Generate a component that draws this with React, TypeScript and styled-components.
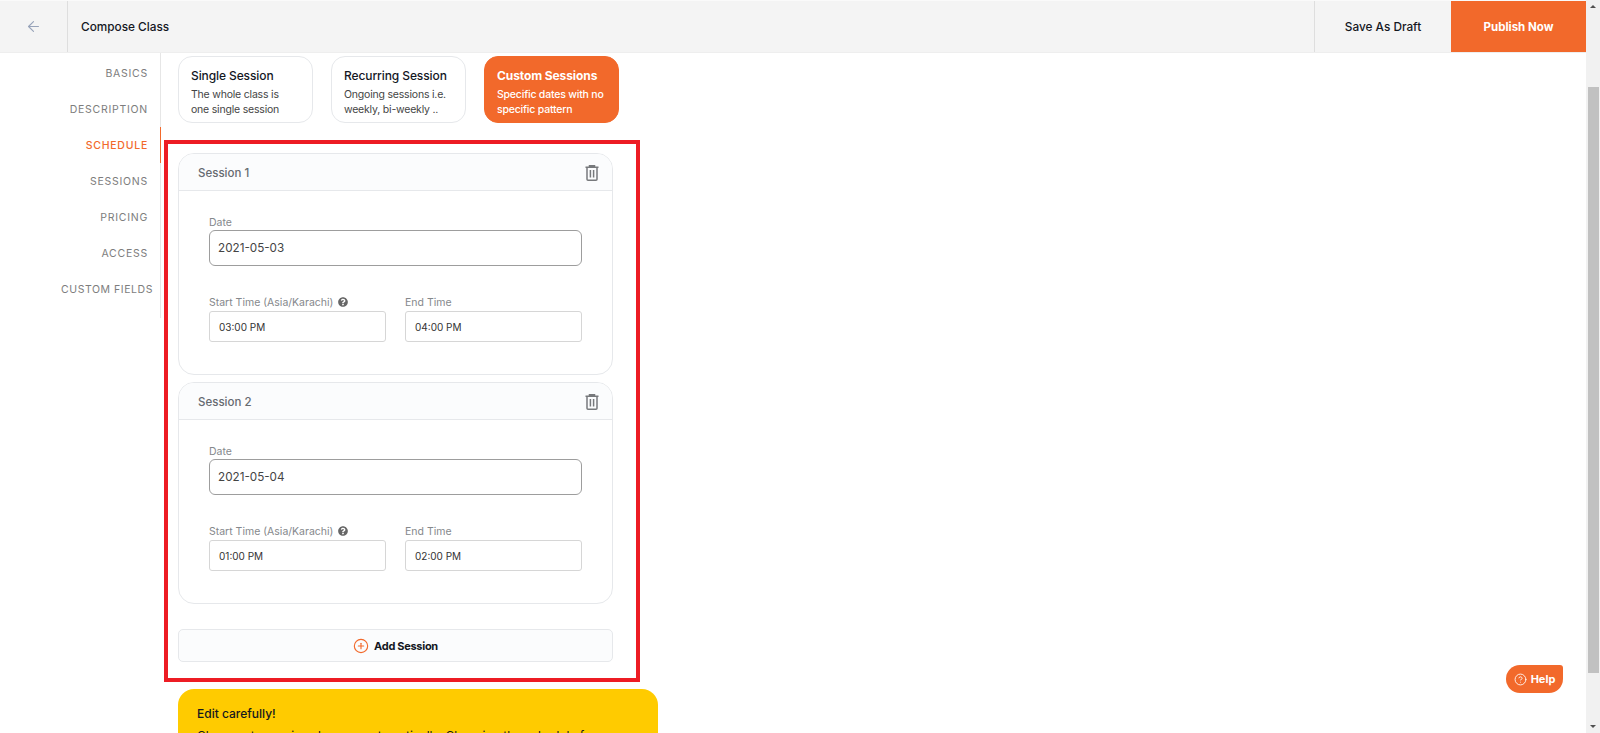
import React from "react";
import styled, { createGlobalStyle } from "styled-components";
import { ArrowLeft, CircleHelp, CirclePlus } from "lucide-react";
import { FaQuestionCircle } from "react-icons/fa";

const orange = "#f2692b";

const Global = createGlobalStyle`
  html, body { margin: 0; padding: 0; height: 100%; overflow: hidden; background: #fff; }
  body { font-family: Inter, "Liberation Sans", sans-serif; }
  * { box-sizing: border-box; }
`;

const Page = styled.div`
  display: flex;
  height: 733px;
  overflow: hidden;
`;

const Main = styled.div`
  flex: 1;
  min-width: 0;
  display: flex;
  flex-direction: column;
`;

const Header = styled.header`
  flex: none;
  height: 53px;
  display: flex;
  background: #f4f4f4;
  border-top: 1px solid #fafafa;
  border-bottom: 1px solid #eeeeee;
`;

const BackCell = styled.div`
  width: 68px;
  display: flex;
  align-items: center;
  justify-content: center;
  color: #98a4ba;
  border-right: 1px solid #dedede;
`;

const Title = styled.div`
  flex: 1;
  display: flex;
  align-items: center;
  padding-left: 13px;
  font-size: 11.8px;
  font-weight: 500;
  color: #14171f;
`;

const DraftButton = styled.div`
  width: 137px;
  display: flex;
  align-items: center;
  justify-content: center;
  font-size: 11.8px;
  font-weight: 500;
  color: #14171f;
  border-left: 1px solid #dedede;
`;

const PublishButton = styled.div`
  width: 135px;
  display: flex;
  align-items: center;
  justify-content: center;
  font-size: 11.5px;
  font-weight: 700;
  color: #fff;
  background: ${orange};
`;

const Body = styled.div`
  flex: 1;
  min-height: 0;
  display: flex;
  align-items: flex-start;
`;

const Sidebar = styled.nav`
  flex: none;
  width: 161px;
  padding: 2px 0 11px;
  border-right: 1px solid #e6e6e6;
`;

const NavItem = styled.div<{ $active?: boolean; $wide?: boolean }>`
  height: 36px;
  margin-right: -1px;
  display: flex;
  align-items: center;
  justify-content: flex-end;
  padding-right: ${(p) => (p.$wide ? 7 : 12)}px;
  font-size: 10.5px;
  letter-spacing: ${(p) => (p.$wide ? 0.55 : 0.75)}px;
  white-space: nowrap;
  color: ${(p) => (p.$active ? orange : "#7d7d7d")};
  font-weight: ${(p) => (p.$active ? 500 : 400)};
  border-right: 1px solid ${(p) => (p.$active ? orange : "transparent")};
`;

const Content = styled.main`
  flex: 1;
  min-width: 0;
  padding: 3px 0 0 3px;
`;

const TypeRow = styled.div`
  display: flex;
  gap: 18px;
  margin-left: 14px;
`;

const TypeCard = styled.div<{ $active?: boolean }>`
  width: 135px;
  height: 67px;
  padding: 11px 12px;
  border-radius: 14px;
  border: 1px solid ${(p) => (p.$active ? orange : "#e6e8eb")};
  background: ${(p) => (p.$active ? orange : "#fff")};
  color: ${(p) => (p.$active ? "#fff" : "#14171f")};
`;

const TypeTitle = styled.div<{ $active?: boolean }>`
  font-size: 12px;
  font-weight: ${(p) => (p.$active ? 700 : 500)};
  letter-spacing: -0.1px;
  line-height: 16px;
  white-space: nowrap;
`;

const TypeText = styled.div<{ $active?: boolean }>`
  margin-top: 4px;
  font-size: 10.5px;
  letter-spacing: -0.2px;
  line-height: 14.5px;
  white-space: pre;
  color: ${(p) => (p.$active ? "#fff" : "#444")};
  font-weight: ${(p) => (p.$active ? 500 : 400)};
`;

const Marked = styled.section`
  width: 476px;
  margin-top: 17px;
  padding: 9px 23px 16px 10px;
  border: 4px solid #ed1c24;
`;

const SessionCard = styled.div`
  height: 222px;
  margin-bottom: 7px;
  border: 1px solid #e6e8eb;
  border-radius: 16px;
  overflow: hidden;
`;

const SessionHead = styled.div`
  height: 37px;
  display: flex;
  align-items: center;
  justify-content: space-between;
  padding: 1px 13px 0 19px;
  font-size: 11.5px;
  font-weight: 500;
  color: #666a70;
  background: #fbfcfd;
  border-bottom: 1px solid #e6e8eb;
`;

const SessionBody = styled.div`
  padding: 23px 30px 0;
`;

const Label = styled.label`
  display: flex;
  align-items: center;
  gap: 5px;
  height: 16px;
  font-size: 10.5px;
  color: #85888c;
  white-space: nowrap;
`;

const DateInput = styled.div`
  height: 36px;
  margin-bottom: 28px;
  display: flex;
  align-items: center;
  padding-left: 8px;
  font-size: 11.7px;
  color: #444;
  border: 1px solid #9d9d9d;
  border-radius: 6px;
`;

const TimeRow = styled.div`
  display: grid;
  grid-template-columns: 177px 177px;
  gap: 19px;
`;

const TimeInput = styled.div`
  height: 31px;
  margin-top: 1px;
  display: flex;
  align-items: center;
  padding-left: 9px;
  font-size: 10px;
  color: #333;
  border: 1px solid #d6d6d6;
  border-radius: 3px;
`;

const AddButton = styled.div`
  height: 33px;
  margin-top: 25px;
  display: flex;
  align-items: center;
  justify-content: center;
  gap: 5px;
  font-size: 11px;
  font-weight: 700;
  letter-spacing: -0.3px;
  color: #14171f;
  background: #fbfcfd;
  border: 1px solid #e6e8eb;
  border-radius: 5px;
`;

const AddIcon = styled.span`
  display: flex;
  color: ${orange};
`;

const Notice = styled.aside`
  width: 480px;
  height: 120px;
  margin: 7px 0 0 14px;
  padding: 17px 19px;
  background: #ffcb00;
  border-radius: 16px;
  color: #14171f;
  font-size: 12px;
  line-height: 16px;
  font-weight: 500;
`;

const NoticeText = styled.p`
  margin: 5px 0 0;
  font-weight: 400;
  line-height: 18px;
`;

const Scrollbar = styled.div`
  flex: none;
  width: 14px;
  display: flex;
  flex-direction: column;
  align-items: center;
  background: #f1f1f1;
`;

const ScrollArrow = styled.div<{ $down?: boolean }>`
  width: 0;
  height: 0;
  margin: ${(p) => (p.$down ? "auto 0 5px" : "5px 0")};
  border-left: 3px solid transparent;
  border-right: 3px solid transparent;
  border-${(p) => (p.$down ? "top" : "bottom")}: 3px solid #505050;
`;

const ScrollThumb = styled.div`
  width: 11px;
  height: 586px;
  margin-top: 74px;
  background: #c1c1c1;
`;

const HelpButton = styled.div`
  position: fixed;
  left: 1506px;
  top: 665px;
  width: 57px;
  height: 28px;
  display: flex;
  align-items: center;
  justify-content: center;
  gap: 4px;
  font-size: 11px;
  font-weight: 700;
  color: #fff;
  background: ${orange};
  border-radius: 14px 3px 14px 14px;
`;

const TrashIcon = () => (
  <svg width="14" height="16" viewBox="0 0 14 16" fill="none" stroke="#77797c" strokeWidth="1.5">
    <path d="M0.5 2.2H13.5M4.5 2V0.8H9.5V2M2 2.2V14.2A1 1 0 0 0 3 15.2H11A1 1 0 0 0 12 14.2V2.2M5.4 5V12.5M8.6 5V12.5" />
  </svg>
);

const navItems = ["BASICS", "DESCRIPTION", "SCHEDULE", "SESSIONS", "PRICING", "ACCESS", "CUSTOM FIELDS"];

const types = [
  { title: "Single Session", text: "The whole class is\none single session" },
  { title: "Recurring Session", text: "Ongoing sessions i.e.\nweekly, bi-weekly .." },
  { title: "Custom Sessions", text: "Specific dates with no\nspecific pattern", active: true },
];

const sessions = [
  { name: "Session 1", date: "2021-05-03", start: "03:00 PM", end: "04:00 PM" },
  { name: "Session 2", date: "2021-05-04", start: "01:00 PM", end: "02:00 PM" },
];

export default function App() {
  return (
    <Page>
      <Global />
      <Main>
        <Header>
          <BackCell>
            <ArrowLeft size={17} strokeWidth={1.6} />
          </BackCell>
          <Title>Compose Class</Title>
          <DraftButton>Save As Draft</DraftButton>
          <PublishButton>Publish Now</PublishButton>
        </Header>
        <Body>
          <Sidebar>
            {navItems.map((item) => (
              <NavItem key={item} $active={item === "SCHEDULE"} $wide={item === "CUSTOM FIELDS"}>
                {item}
              </NavItem>
            ))}
          </Sidebar>
          <Content>
            <TypeRow>
              {types.map((t) => (
                <TypeCard key={t.title} $active={t.active}>
                  <TypeTitle $active={t.active}>{t.title}</TypeTitle>
                  <TypeText $active={t.active}>{t.text}</TypeText>
                </TypeCard>
              ))}
            </TypeRow>
            <Marked>
              {sessions.map((s) => (
                <SessionCard key={s.name}>
                  <SessionHead>
                    {s.name}
                    <TrashIcon />
                  </SessionHead>
                  <SessionBody>
                    <Label>Date</Label>
                    <DateInput>{s.date}</DateInput>
                    <TimeRow>
                      <div>
                        <Label>
                          Start Time (Asia/Karachi)
                          <FaQuestionCircle size={10} color="#666" />
                        </Label>
                        <TimeInput>{s.start}</TimeInput>
                      </div>
                      <div>
                        <Label>End Time</Label>
                        <TimeInput>{s.end}</TimeInput>
                      </div>
                    </TimeRow>
                  </SessionBody>
                </SessionCard>
              ))}
              <AddButton>
                <AddIcon>
                  <CirclePlus size={16} strokeWidth={1.7} />
                </AddIcon>
                Add Session
              </AddButton>
            </Marked>
            <Notice>
              Edit carefully!
              <NoticeText>Changes to sessions happen automatically. Changing the schedule for an event</NoticeText>
            </Notice>
          </Content>
        </Body>
      </Main>
      <Scrollbar>
        <ScrollArrow />
        <ScrollThumb />
        <ScrollArrow $down />
      </Scrollbar>
      <HelpButton>
        <CircleHelp size={13} strokeWidth={1.6} />
        Help
      </HelpButton>
    </Page>
  );
}
